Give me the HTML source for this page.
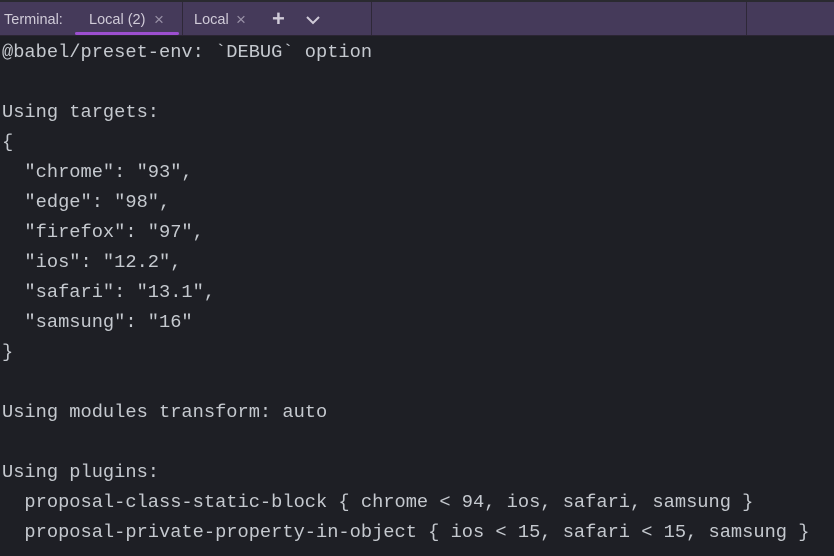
<!DOCTYPE html>
<html><head><style>
html,body{margin:0;padding:0;width:834px;height:556px;overflow:hidden;background:#1e1f25;}
.top{position:absolute;left:0;top:0;width:834px;height:2px;background:#2a2a30;}
.bar{position:absolute;left:0;top:2px;width:834px;height:33px;background:#453a5a;border-bottom:1px solid #2b2533;font-family:"Liberation Sans",sans-serif;font-size:14.5px;color:#d0cbd8;}
.bar span{position:absolute;top:10px;}
.sep{position:absolute;top:0;width:1px;height:33px;background:#2e2838;}
.ul{position:absolute;left:75px;top:30px;width:104px;height:3px;border-radius:2px;background:#9c4fd0;}
.x{color:#9a92a8;}
pre{position:absolute;left:2px;top:37px;margin:0;font-family:"Liberation Mono",monospace;font-size:18.7px;line-height:30px;color:#c5c9cf;}
</style></head><body>
<div class="top"></div>
<div class="bar">
<span style="left:4px">Terminal:</span>
<span style="left:89px">Local (2)</span>
<span class="x" style="left:154px;top:8px;font-size:17px">×</span>
<div class="sep" style="left:182px"></div>
<span style="left:194px">Local</span>
<span class="x" style="left:236px;top:8px;font-size:17px">×</span>
<span style="left:272px;top:4px;font-size:22px;font-weight:bold">+</span>
<svg style="position:absolute;left:305px;top:13px" width="16" height="10"><path d="M2 2 L8 8 L14 2" stroke="#d0cbd8" stroke-width="2" fill="none"/></svg>
<div class="sep" style="left:371px"></div>
<div class="sep" style="left:746px"></div>
<div class="ul"></div>
</div>
<pre>@babel/preset-env: `DEBUG` option

Using targets:
{
  "chrome": "93",
  "edge": "98",
  "firefox": "97",
  "ios": "12.2",
  "safari": "13.1",
  "samsung": "16"
}

Using modules transform: auto

Using plugins:
  proposal-class-static-block { chrome &lt; 94, ios, safari, samsung }
  proposal-private-property-in-object { ios &lt; 15, safari &lt; 15, samsung }</pre>
</body></html>
